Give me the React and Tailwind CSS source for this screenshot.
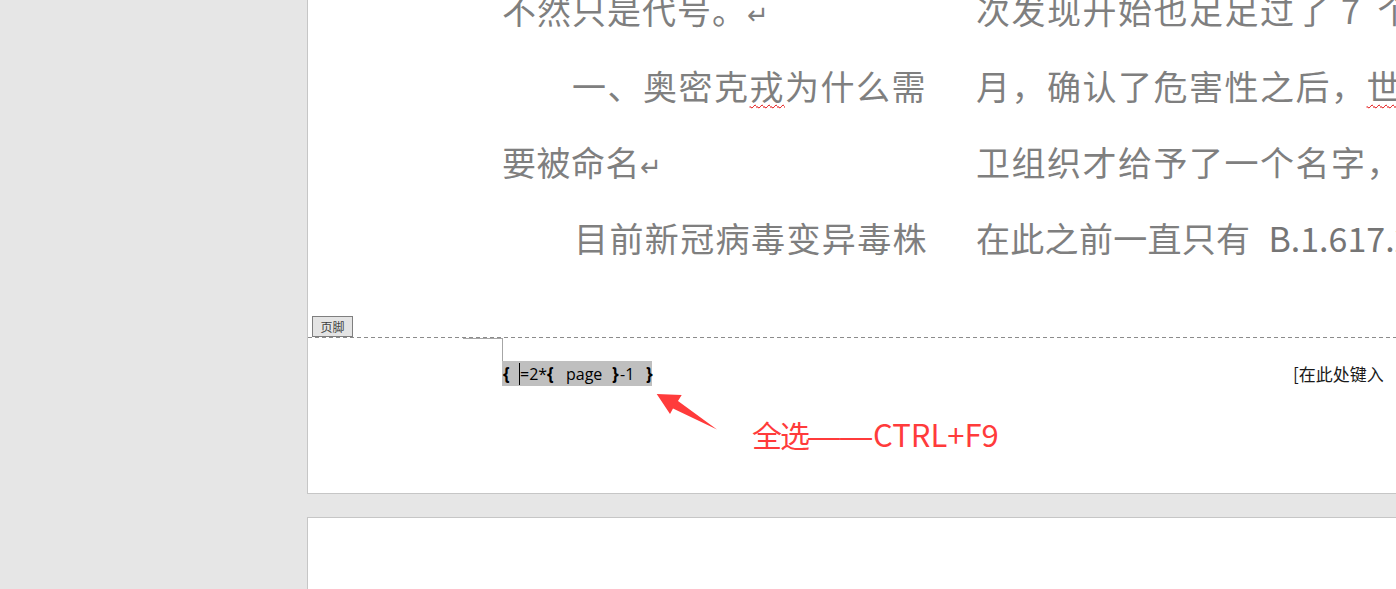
import React from "react";

const CJK = "font-['Noto_Sans_CJK_SC','DejaVu_Sans',sans-serif]";

function Line({ children, className = "" }) {
  return (
    <div className={`h-[76px] leading-[76px] whitespace-nowrap ${className}`}>{children}</div>
  );
}

export default function App() {
  return (
    <div className="relative w-[1396px] h-[589px] overflow-hidden bg-[#e6e6e6] flex">
      <div className="w-[307px] shrink-0" />
      <div className="w-[1089px] shrink-0 flex flex-col">
        {/* Page 1 */}
        <div className="h-[494px] bg-white border-l border-b border-[#c6c6c6] flex flex-col">
          {/* body text */}
          <div className="h-[316px] overflow-hidden">
            <div className={`mt-[-28px] pl-[194px] flex text-[34px] text-[#7f7f7f] ${CJK}`}>
              <div className="w-[474px] shrink-0">
                <Line className="tracking-[1px]">不然只是代号。<span className="text-[26px]">↵</span></Line>
                <Line className="pl-[70px] tracking-[1.5px]">
                  一、奥密克<span className="underline decoration-wavy decoration-[#e00000] decoration-1 underline-offset-[4px]">戎</span>为什么需
                </Line>
                <Line className="tracking-[0.5px]">要被命名<span className="text-[26px]">↵</span></Line>
                <Line className="pl-[72px] tracking-[1.4px]">目前新冠病毒变异毒株</Line>
              </div>
              <div className="flex-1">
                <Line className="tracking-[1.5px]">
                  次发现开始也足足过了<span className="ml-[10px] mr-[16px]">7</span>个
                </Line>
                <Line className="tracking-[1.5px]">
                  月，确认了危害性之后，<span className="underline decoration-wavy decoration-[#e00000] decoration-1 underline-offset-[4px]">世</span>
                </Line>
                <Line className="tracking-[1.5px]">卫组织才给予了一个名字，</Line>
                <Line className="tracking-[0.3px]">
                  在此之前一直只有<span className="ml-[18px] tracking-normal text-[#757575]">B.1.617.2</span>
                </Line>
              </div>
            </div>
          </div>

          {/* footer tag */}
          <div className="h-[21px] flex">
            <div className={`ml-[4px] w-[41px] h-[21px] bg-[#e4e4e4] border border-[#7f7f7f] flex items-center justify-center text-[12px] leading-none text-[#404040] ${CJK}`}>
              页脚
            </div>
          </div>
          {/* dashed line */}
          <div className="h-px bg-[repeating-linear-gradient(to_right,#8c8c8c_0px,#8c8c8c_4px,transparent_4px,transparent_7px)]" />

          {/* corner mark */}
          <div className="h-[23px] flex">
            <div className="ml-[155px] w-[40px] h-full border-t border-r border-[#a6a6a6]" />
          </div>

          {/* field row */}
          <div className="h-[25px] flex items-center">
            <div className="ml-[194px] w-[150px] h-[25px] bg-[#bfbfbf] flex items-center text-[16px] text-black font-['Open_Sans',sans-serif] leading-none whitespace-nowrap">
              <span className="w-[17px] pl-[1px] font-bold text-[17px]">{"{"}</span>
              <span className="w-px h-[22px] bg-black" />
              <span className="w-[27px]">=2*</span>
              <span className="w-[19px] font-bold text-[17px]">{"{"}</span>
              <span className="w-[46px]">page</span>
              <span className="w-[8px] font-bold text-[17px]">{"}"}</span>
              <span className="w-[26px]">-1</span>
              <span className="w-[6px] font-bold text-[17px]">{"}"}</span>
            </div>
            <div className={`ml-[641px] text-[17px] leading-none text-[#1a1a1a] whitespace-nowrap ${CJK}`}>
              [在此处键入
            </div>
          </div>

          {/* annotation text */}
          <div className="mt-[28px] pl-[444px] flex items-baseline whitespace-nowrap text-[#ff3b3b] leading-[40px]">
            <span className={`${CJK} text-[30px] tracking-[-2px]`}>全选</span>
            <span className="font-['Liberation_Sans',sans-serif] text-[32px]">——</span>
            <span className="font-['Noto_Sans_CJK_SC',sans-serif] text-[31px] ml-[1px]">CTRL+F9</span>
          </div>
        </div>

        {/* gap */}
        <div className="h-[23px] shrink-0" />

        {/* Page 2 */}
        <div className="flex-1 bg-white border-l border-t border-[#c6c6c6]" />
      </div>

      {/* red arrow overlay */}
      <svg className="absolute left-[650px] top-[385px] w-[75px] h-[50px]" viewBox="0 0 75 50">
        <polygon points="6.7,9 31.7,10 28,16 67,44.5 23,23.5 20,29" fill="#ff3b3b" />
      </svg>
    </div>
  );
}
